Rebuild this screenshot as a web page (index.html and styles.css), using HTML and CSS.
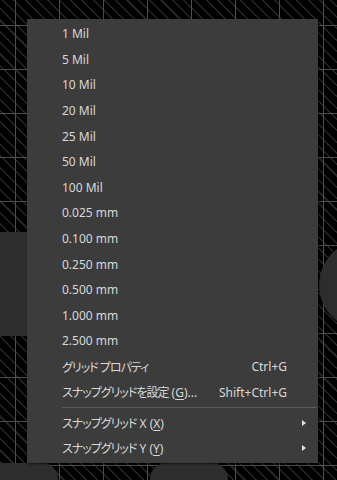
FILE: index.html
```html
<!doctype html>
<html lang="ja">
  <head>
    <meta charset="UTF-8" />
    <meta name="viewport" content="width=device-width, initial-scale=1.0" />
    <title>Grid menu</title>
    <link rel="stylesheet" href="styles.css">
  </head>
  <body>
    <div class="board">
      <div class="pad pad-left"></div>
      <div class="pad pad-right"></div>
      <div class="pad pad-bottom-a"></div>
      <div class="pad pad-bottom-b"></div>

      <div class="menu">
        <div class="item">1 Mil</div>
        <div class="item">5 Mil</div>
        <div class="item">10 Mil</div>
        <div class="item">20 Mil</div>
        <div class="item">25 Mil</div>
        <div class="item">50 Mil</div>
        <div class="item">100 Mil</div>
        <div class="item">0.025 mm</div>
        <div class="item">0.100 mm</div>
        <div class="item">0.250 mm</div>
        <div class="item">0.500 mm</div>
        <div class="item">1.000 mm</div>
        <div class="item">2.500 mm</div>
        <div class="item">
          <span class="ja">グリッド プロパティ</span>
          <span class="key">Ctrl+G</span>
        </div>
        <div class="item">
          <span><span class="ja">スナップグリッドを設定</span> (<u>G</u>)...</span>
          <span class="key">Shift+Ctrl+G</span>
        </div>
        <div class="sep"></div>
        <div class="item">
          <span><span class="ja">スナップグリッド</span> X (<u>X</u>)</span>
          <span class="arrow"></span>
        </div>
        <div class="item">
          <span><span class="ja">スナップグリッド</span> Y (<u>Y</u>)</span>
          <span class="arrow"></span>
        </div>
      </div>
    </div>
  </body>
</html>
```

FILE: styles.css
```css
body {
  margin: 0;
  background: #000;
  font-family: "Noto Sans", "Noto Sans CJK JP", sans-serif;
}
.board {
  position: relative;
  width: 337px;
  height: 480px;
  overflow: hidden;
  background:
    linear-gradient(90deg, transparent 15px, #4e4e4e 15px, #4e4e4e 16px, transparent 16px) 0 0 / 44px 44px,
    linear-gradient(180deg, transparent 25px, #4e4e4e 25px, #4e4e4e 26px, transparent 26px) 0 0 / 44px 44px,
    repeating-linear-gradient(45deg, #000 0, #000 4.5px, #242424 4.5px, #242424 6px, #000 6px, #000 8px);
}
.pad {
  position: absolute;
  background: #2d2d2d;
}
.pad-left {
  left: -60px;
  top: 232px;
  width: 100px;
  height: 104px;
  border-radius: 10px;
}
.pad-right {
  left: 319px;
  top: 240px;
  width: 90px;
  height: 90px;
  border-radius: 45px;
}
.pad-bottom-a {
  left: -40px;
  top: 463px;
  width: 98px;
  height: 80px;
  border-radius: 16px;
}
.pad-bottom-b {
  left: 150px;
  top: 463px;
  width: 78px;
  height: 80px;
  border-radius: 16px;
}
.menu {
  position: absolute;
  left: 27px;
  top: 19px;
  width: 291px;
  height: 444px;
  box-sizing: border-box;
  padding: 2px 0 0;
  background: #3c3c3c;
  box-shadow: 1px 1px 2px rgba(0, 0, 0, 0.6);
  color: #d8d8d8;
  font-size: 12px;
  font-feature-settings: "palt";
  white-space: nowrap;
}
.item {
  display: flex;
  align-items: center;
  justify-content: space-between;
  height: 25.6px;
  padding: 0 31px 0 35px;
}
.ja {
  letter-spacing: -1px;
}
.item u {
  text-underline-offset: 2px;
}
.arrow {
  width: 0;
  height: 0;
  margin-right: -19px;
  border-top: 3.5px solid transparent;
  border-bottom: 3.5px solid transparent;
  border-left: 4px solid #e0e0e0;
}
.sep {
  height: 1px;
  margin: 2px 1px 2px 35px;
  background: #5a5a5a;
}
```
